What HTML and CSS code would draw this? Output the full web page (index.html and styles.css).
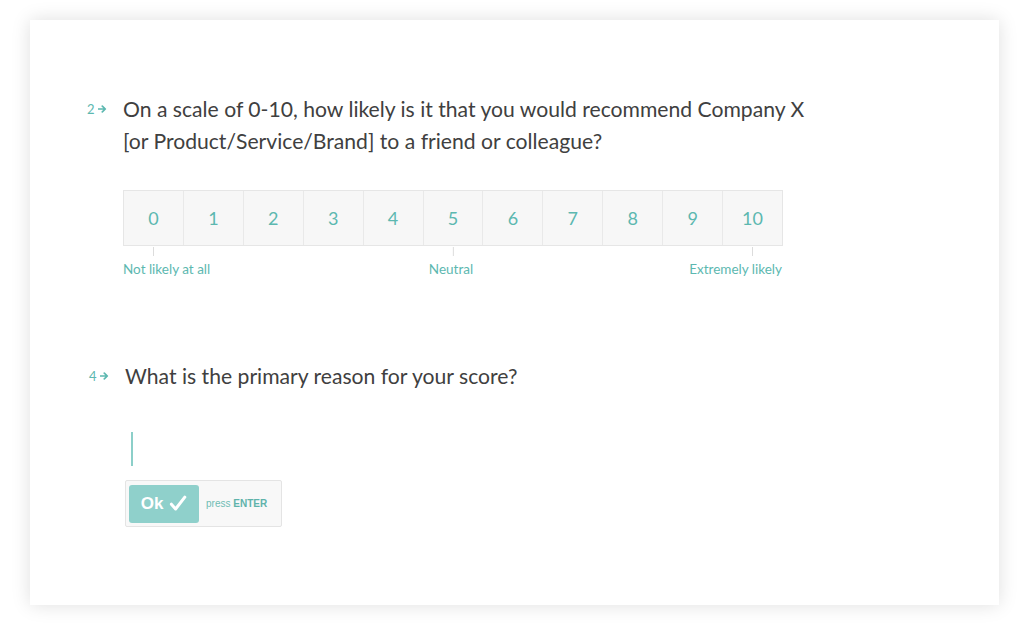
FILE: index.html
```html
<!DOCTYPE html>
<html>
<head>
<meta charset="utf-8">
<link rel="stylesheet" href="styles.css">
</head>
<body>
<div class="card">
  <section class="question q-first">
    <div class="qnum">2<svg class="arrow" width="9" height="8" viewBox="0 0 9 8"><path d="M0.5 4 H7 M4.3 1.2 L7.3 4 L4.3 6.8" fill="none" stroke="#5cb8b0" stroke-width="1.7" stroke-linecap="round" stroke-linejoin="round"/></svg></div>
    <div class="qbody">
      <h2 class="qtext">On a scale of 0-10, how likely is it that you would recommend Company X<br>[or Product/Service/Brand] to a friend or colleague?</h2>
      <div class="scale">
        <div class="opt">0</div><div class="opt">1</div><div class="opt">2</div><div class="opt">3</div><div class="opt">4</div><div class="opt">5</div><div class="opt">6</div><div class="opt">7</div><div class="opt">8</div><div class="opt">9</div><div class="opt">10</div>
      </div>
      <div class="labels">
        <span class="lbl lbl-left">Not likely at all</span>
        <span class="lbl lbl-mid">Neutral</span>
        <span class="lbl lbl-right">Extremely likely</span>
      </div>
    </div>
  </section>
  <section class="question q-second">
    <div class="qnum">4<svg class="arrow" width="9" height="8" viewBox="0 0 9 8"><path d="M0.5 4 H7 M4.3 1.2 L7.3 4 L4.3 6.8" fill="none" stroke="#5cb8b0" stroke-width="1.7" stroke-linecap="round" stroke-linejoin="round"/></svg></div>
    <div class="qbody">
      <h2 class="qtext">What is the primary reason for your score?</h2>
      <div class="answer"><span class="cursor"></span></div>
      <div class="okbar">
        <button class="okbtn">Ok <svg class="check" width="18" height="17" viewBox="0 0 18 17"><path d="M2.4 9.2 L6.6 14 L15.8 2.2" fill="none" stroke="#fff" stroke-width="3" stroke-linecap="round" stroke-linejoin="round"/></svg></button>
        <span class="hint">press <b>ENTER</b></span>
      </div>
    </div>
  </section>
</div>
</body>
</html>
```
FILE: styles.css
```css
html, body { margin: 0; padding: 0; background: #ffffff; }
body { font-family: "Lato", "Open Sans", sans-serif; color: #404040; }
.card {
  margin: 20px 25px 30px 30px;
  height: 585px;
  background: #fff;
  box-shadow: 0 0 18px rgba(0,0,0,0.13);
  box-sizing: border-box;
  padding-top: 73px;
}
.question { display: flex; }
.q-first { padding-left: 57px; }
.q-second { padding-left: 59px; margin-top: 83px; }
.qnum {
  width: 36px;
  font-size: 13px;
  color: #5cb8b0;
  line-height: 32px;
  flex: none;
  display: flex;
  align-items: center;
  align-self: flex-start;
  height: 32px;
}
.arrow { margin-left: 3px; display: block; }
.qtext {
  margin: 0;
  font-size: 21.15px;
  font-weight: 400;
  line-height: 32px;
  color: #404040;
  white-space: nowrap;
}
.scale {
  display: flex;
  margin-top: 33px;
  width: 660px;
  border: 1px solid #e6e6e6;
  box-sizing: border-box;
}
.opt {
  flex: 1;
  height: 54px;
  line-height: 54px;
  text-align: center;
  background: #f7f7f7;
  color: #5cb8b0;
  font-size: 18px;
  border-left: 1px solid #e9e9e9;
}
.opt:first-child { border-left: none; }
.labels {
  position: relative;
  width: 659px;
  height: 31px;
  font-size: 13.5px;
  color: #5cb8b0;
  display: flex;
  justify-content: space-between;
  align-items: flex-end;
}
.lbl { position: relative; line-height: 16px; }
.lbl::before {
  content: "";
  position: absolute;
  top: -14px;
  width: 1px;
  height: 9px;
  background: #dcdcdc;
}
.lbl-left::before { left: 30px; }
.lbl-mid {
  position: absolute;
  left: 328px;
  bottom: 0;
  transform: translateX(-50%);
}
.lbl-mid::before { left: calc(50% + 2px); }
.lbl-right::before { right: 29px; }
.answer { margin-top: 40px; height: 34px; padding-left: 6px; }
.cursor { display: block; width: 2px; height: 34px; background: #8ccfc9; }
.okbar {
  margin-top: 14px;
  width: 157px;
  height: 47px;
  box-sizing: border-box;
  border: 1px solid #e4e4e4;
  background: #f8f8f8;
  border-radius: 2px;
  display: flex;
  align-items: center;
  padding-left: 3px;
}
.okbtn {
  width: 70px;
  height: 38px;
  border: none;
  border-radius: 3px;
  background: #8fd0cb;
  color: #fff;
  font-family: "Liberation Sans", Arial, sans-serif;
  font-weight: 700;
  font-size: 17px;
  display: flex;
  align-items: center;
  justify-content: center;
  gap: 6px;
  padding: 0;
}
.hint {
  margin-left: 7px;
  font-family: "Liberation Sans", Arial, sans-serif;
  font-size: 10px;
  color: #6fbcb4;
}
.hint b { color: #5fb3ab; font-weight: 700; }
```
